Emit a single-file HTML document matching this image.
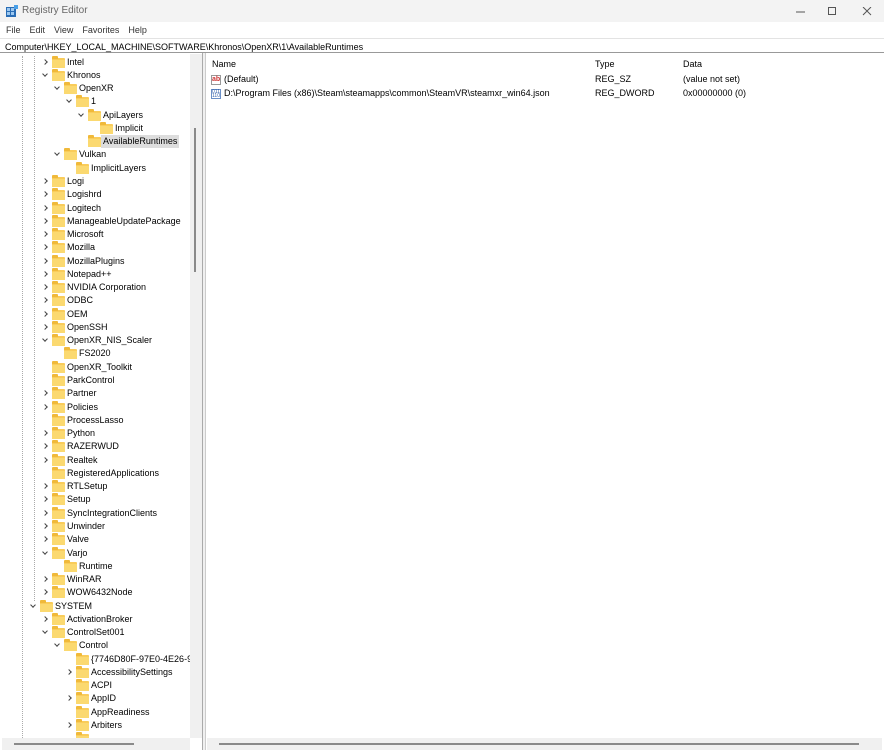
<!DOCTYPE html>
<html><head><meta charset="utf-8"><style>
*{margin:0;padding:0;box-sizing:border-box}
body{width:884px;height:750px;background:#fff;font-family:"Liberation Sans",sans-serif;font-size:9px;color:#000;position:relative;overflow:hidden}
.title{position:absolute;left:0;top:0;width:884px;height:22px;background:#f3f3f3}
.title span{position:absolute;left:22px;top:5px;color:#666;font-size:10px}
.menu{position:absolute;top:25px;left:6px;font-size:9px;color:#333}
.menu span{margin-right:9px}
.addr{position:absolute;left:0;top:38px;width:884px;height:15px;border-top:1px solid #e3e3e3;border-bottom:1px solid #999;padding:3px 0 0 5px;font-size:9px}
.tree{position:absolute;left:2px;top:55.5px;width:188px;height:682px;overflow:hidden}
.r{position:absolute;height:13px;line-height:13px;white-space:nowrap}
.r i{position:absolute;left:0;top:2px;width:13px;height:10px;background:#f9cc5a;border-radius:1px}
.r i:before{content:"";position:absolute;left:0;top:-2px;width:6px;height:3px;background:#f0b93a;border-radius:1px 1px 0 0}
.r i:after{content:"";position:absolute;left:0;top:2px;width:13px;height:8px;background:#fbd970}
.r b{position:absolute;left:15px;font-weight:normal}
.r u{position:absolute;left:-9px;top:4px;width:4px;height:4px;border-right:1px solid #444;border-bottom:1px solid #444;transform:rotate(-45deg)}
.r u.d{left:-9px;top:3px;transform:rotate(45deg)}
.sel b{background:#ddd;padding:0 2px;left:13px}
.vs{position:absolute;left:190px;top:54px;width:12px;height:684px;background:#f0f0f0}
.vs div{position:absolute;left:4px;top:74px;width:2px;height:144px;background:#8a8a8a}
.split{position:absolute;left:202px;top:53px;width:4px;height:697px;border-left:1px solid #aaa;border-right:1px solid #ccc;background:#f0f0f0}
.hs{position:absolute;top:738px;height:12px;background:#f0f0f0}
.hs div{position:absolute;top:5px;height:2px;background:#8a8a8a}
.list{position:absolute;left:207px;top:55px}
.g{position:absolute;border-left:1px dotted #aaa}
</style></head><body>
<div class="title">
<svg style="position:absolute;left:6px;top:5px" width="12" height="12"><rect x="0" y="2" width="10" height="10" fill="#2a6db5"/><rect x="1" y="3" width="3" height="3" fill="#9cc8f0"/><rect x="5" y="3" width="3" height="3" fill="#9cc8f0"/><rect x="1" y="7" width="3" height="3" fill="#9cc8f0"/><rect x="5" y="7" width="3" height="3" fill="#9cc8f0"/><rect x="8" y="0" width="4" height="4" fill="#4aa0e8"/></svg>
<span>Registry Editor</span>
<svg style="position:absolute;left:796px;top:7px" width="80" height="10" stroke="#555" fill="none" stroke-width="1"><line x1="0" y1="5" x2="9" y2="5"/><rect x="32.5" y="0.5" width="7" height="7"/><path d="M67 0 L75 8 M75 0 L67 8"/></svg>
</div>
<div class="menu"><span>File</span><span>Edit</span><span>View</span><span>Favorites</span><span>Help</span></div>
<div class="addr">Computer\HKEY_LOCAL_MACHINE\SOFTWARE\Khronos\OpenXR\1\AvailableRuntimes</div>
<div class="tree">
<div class="g" style="left:32px;top:0;height:545px"></div>
<div class="g" style="left:20px;top:0;height:684px"></div>
<div class="r" style="left:50px;top:0"><u></u><i></i><b>Intel</b></div>
<div class="r" style="left:50px;top:13.3px"><u class="d"></u><i></i><b>Khronos</b></div>
<div class="r" style="left:62px;top:26.5px"><u class="d"></u><i></i><b>OpenXR</b></div>
<div class="r" style="left:74px;top:39.8px"><u class="d"></u><i></i><b>1</b></div>
<div class="r" style="left:86px;top:53.1px"><u class="d"></u><i></i><b>ApiLayers</b></div>
<div class="r" style="left:98px;top:66.4px"><i></i><b>Implicit</b></div>
<div class="r sel" style="left:86px;top:79.6px"><i></i><b>AvailableRuntimes</b></div>
<div class="r" style="left:62px;top:92.9px"><u class="d"></u><i></i><b>Vulkan</b></div>
<div class="r" style="left:74px;top:106.2px"><i></i><b>ImplicitLayers</b></div>
<div class="r" style="left:50px;top:119.4px"><u></u><i></i><b>Logi</b></div>
<div class="r" style="left:50px;top:132.7px"><u></u><i></i><b>Logishrd</b></div>
<div class="r" style="left:50px;top:146px"><u></u><i></i><b>Logitech</b></div>
<div class="r" style="left:50px;top:159.2px"><u></u><i></i><b>ManageableUpdatePackage</b></div>
<div class="r" style="left:50px;top:172.5px"><u></u><i></i><b>Microsoft</b></div>
<div class="r" style="left:50px;top:185.8px"><u></u><i></i><b>Mozilla</b></div>
<div class="r" style="left:50px;top:199px"><u></u><i></i><b>MozillaPlugins</b></div>
<div class="r" style="left:50px;top:212.3px"><u></u><i></i><b>Notepad++</b></div>
<div class="r" style="left:50px;top:225.6px"><u></u><i></i><b>NVIDIA Corporation</b></div>
<div class="r" style="left:50px;top:238.9px"><u></u><i></i><b>ODBC</b></div>
<div class="r" style="left:50px;top:252.1px"><u></u><i></i><b>OEM</b></div>
<div class="r" style="left:50px;top:265.4px"><u></u><i></i><b>OpenSSH</b></div>
<div class="r" style="left:50px;top:278.7px"><u class="d"></u><i></i><b>OpenXR_NIS_Scaler</b></div>
<div class="r" style="left:62px;top:291.9px"><i></i><b>FS2020</b></div>
<div class="r" style="left:50px;top:305.2px"><i></i><b>OpenXR_Toolkit</b></div>
<div class="r" style="left:50px;top:318.5px"><i></i><b>ParkControl</b></div>
<div class="r" style="left:50px;top:331.7px"><u></u><i></i><b>Partner</b></div>
<div class="r" style="left:50px;top:345px"><u></u><i></i><b>Policies</b></div>
<div class="r" style="left:50px;top:358.3px"><i></i><b>ProcessLasso</b></div>
<div class="r" style="left:50px;top:371.5px"><u></u><i></i><b>Python</b></div>
<div class="r" style="left:50px;top:384.8px"><u></u><i></i><b>RAZERWUD</b></div>
<div class="r" style="left:50px;top:398.1px"><u></u><i></i><b>Realtek</b></div>
<div class="r" style="left:50px;top:411.4px"><i></i><b>RegisteredApplications</b></div>
<div class="r" style="left:50px;top:424.6px"><u></u><i></i><b>RTLSetup</b></div>
<div class="r" style="left:50px;top:437.9px"><u></u><i></i><b>Setup</b></div>
<div class="r" style="left:50px;top:451.2px"><u></u><i></i><b>SyncIntegrationClients</b></div>
<div class="r" style="left:50px;top:464.4px"><u></u><i></i><b>Unwinder</b></div>
<div class="r" style="left:50px;top:477.7px"><u></u><i></i><b>Valve</b></div>
<div class="r" style="left:50px;top:491px"><u class="d"></u><i></i><b>Varjo</b></div>
<div class="r" style="left:62px;top:504.2px"><i></i><b>Runtime</b></div>
<div class="r" style="left:50px;top:517.5px"><u></u><i></i><b>WinRAR</b></div>
<div class="r" style="left:50px;top:530.8px"><u></u><i></i><b>WOW6432Node</b></div>
<div class="r" style="left:38px;top:544px"><u class="d"></u><i></i><b>SYSTEM</b></div>
<div class="r" style="left:50px;top:557.3px"><u></u><i></i><b>ActivationBroker</b></div>
<div class="r" style="left:50px;top:570.6px"><u class="d"></u><i></i><b>ControlSet001</b></div>
<div class="r" style="left:62px;top:583.9px"><u class="d"></u><i></i><b>Control</b></div>
<div class="r" style="left:74px;top:597.1px"><i></i><b>{7746D80F-97E0-4E26-954</b></div>
<div class="r" style="left:74px;top:610.4px"><u></u><i></i><b>AccessibilitySettings</b></div>
<div class="r" style="left:74px;top:623.7px"><i></i><b>ACPI</b></div>
<div class="r" style="left:74px;top:636.9px"><u></u><i></i><b>AppID</b></div>
<div class="r" style="left:74px;top:650.2px"><i></i><b>AppReadiness</b></div>
<div class="r" style="left:74px;top:663.5px"><u></u><i></i><b>Arbiters</b></div>
<div class="r" style="left:74px;top:676.7px"><i></i></div>
</div>
<div class="vs"><div></div></div>
<div class="split"></div>
<div class="hs" style="left:2px;width:188px"><div style="left:12px;width:120px"></div></div>
<div class="hs" style="left:207px;width:675px"><div style="left:12px;width:640px"></div></div>
<div class="list">
<div class="r" style="left:5px;top:3px"><b style="left:0">Name</b></div>
<div class="r" style="left:388px;top:3px"><b style="left:0">Type</b></div>
<div class="r" style="left:476px;top:3px"><b style="left:0">Data</b></div>
<div class="r" style="left:4px;top:18px"><span style="position:absolute;left:0;top:2px;width:10px;height:10px;border:1px solid #999;color:#c33;font-size:7px;line-height:8px;text-align:center;font-weight:bold">ab</span><b style="left:13px">(Default)</b></div>
<div class="r" style="left:388px;top:18px"><b style="left:0">REG_SZ</b></div>
<div class="r" style="left:476px;top:18px"><b style="left:0">(value not set)</b></div>
<div class="r" style="left:4px;top:32px"><span style="position:absolute;left:0;top:2px;width:10px;height:10px;border:1px solid #6a8fc7;color:#2a5aa8;font-size:5px;line-height:4px;text-align:center">011<br>110</span><b style="left:13px">D:\Program Files (x86)\Steam\steamapps\common\SteamVR\steamxr_win64.json</b></div>
<div class="r" style="left:388px;top:32px"><b style="left:0">REG_DWORD</b></div>
<div class="r" style="left:476px;top:32px"><b style="left:0">0x00000000 (0)</b></div>
</div>
</body></html>
